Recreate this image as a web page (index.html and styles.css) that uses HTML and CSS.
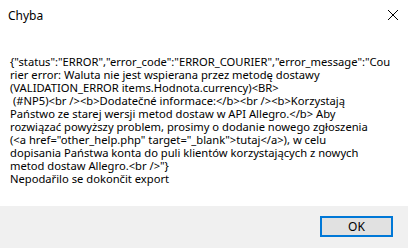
FILE: index.html
```html
<!DOCTYPE html>
<html lang="cs">
<head>
    <meta charset="UTF-8">
    <title>Chyba</title>
    <link rel="stylesheet" href="styles.css">
</head>
<body>
<div class="dialog">
    <div class="title-bar">
        <span class="title">Chyba</span>
        <svg class="close" width="12" height="12" viewBox="0 0 12 12">
            <path d="M1 1 L11 11 M11 1 L1 11" stroke="#000" stroke-width="1" fill="none"/>
        </svg>
    </div>
    <div class="content">
        <div class="message">{"status":"ERROR","error_code":"ERROR_COURIER","error_message":"Cou
rier error: Waluta nie jest wspierana przez metodę dostawy
(VALIDATION_ERROR items.Hodnota.currency)&lt;BR&gt;
 (#NP5)&lt;br /&gt;&lt;b&gt;Dodatečné informace:&lt;/b&gt;&lt;br /&gt;&lt;b&gt;Korzystają
Państwo ze starej wersji metod dostaw w API Allegro.&lt;/b&gt; Aby
rozwiązać powyższy problem, prosimy o dodanie nowego zgłoszenia
(&lt;a href="other_help.php" target="_blank"&gt;tutaj&lt;/a&gt;), w celu
dopisania Państwa konta do puli klientów korzystających z nowych
metod dostaw Allegro.&lt;br /&gt;"}
Nepodařilo se dokončit export</div>
    </div>
    <div class="footer">
        <button class="ok-button">OK</button>
    </div>
</div>
</body>
</html>
```

FILE: styles.css
```css
body {
    margin: 0;
    padding: 0;
    background-color: #FFFFFF;
    font-family: 'Noto Sans', 'Open Sans', sans-serif;
    font-size: 12px;
    color: #000000;
}

.dialog {
    width: 408px;
    height: 248px;
    display: flex;
    flex-direction: column;
}

.title-bar {
    height: 30px;
    display: flex;
    align-items: center;
    justify-content: space-between;
    padding: 0 9px 0 8px;
}

.title {
    font-size: 12px;
}

.content {
    flex: 1;
    padding: 25px 0 0 10px;
}

.message {
    white-space: pre;
    line-height: 13px;
    font-size: 11.2px;
}

.footer {
    height: 42px;
    background-color: #F0F0F0;
    display: flex;
    justify-content: flex-end;
    align-items: flex-start;
    padding: 10px 15px 0 0;
    box-sizing: border-box;
}

.ok-button {
    width: 73px;
    height: 21px;
    background-color: #E1E1E1;
    border: 2px solid #0078D7;
    font-family: 'Noto Sans', 'Open Sans', sans-serif;
    font-size: 12px;
    padding: 0;
    color: #000000;
}
```
